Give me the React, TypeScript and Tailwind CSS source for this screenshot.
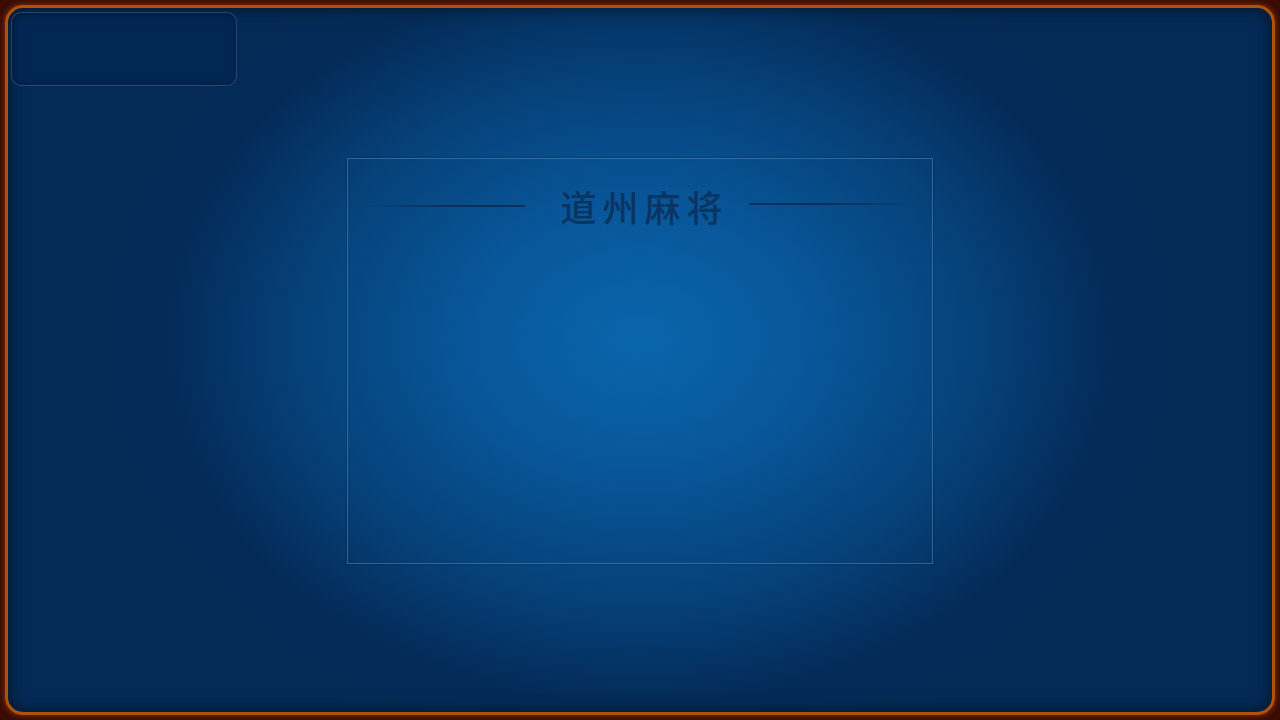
import React from 'react'

export default function App() {
  return (
    <div className="w-[1280px] h-[720px] bg-[#3a0c02] p-[5px] overflow-hidden">
      {/* Table frame */}
      <div className="w-full h-full rounded-[18px] border-[3px] border-[#b0520c] shadow-[0_0_4px_2px_rgba(150,60,5,0.5)] bg-[radial-gradient(ellipse_560px_430px_at_50%_47%,#0a66ab_0%,#08579a_30%,#06427a_60%,#042b58_85%,#042a55_100%)] overflow-hidden">
        <div className="w-full h-full rounded-[15px] shadow-[inset_0_0_16px_rgba(0,0,0,0.55)] pt-[4px] px-[3px] flex flex-col">
          {/* Top-left info panel */}
          <div className="w-[226px] h-[74px] rounded-[10px] border border-[#4a78a8]/45 bg-[#022450]/40 shadow-[inset_0_0_6px_rgba(0,0,0,0.3)]" />

          {/* Center room panel */}
          <div className="flex-1 flex justify-center pt-[72px]">
            <div className="w-[586px] h-[406px] border border-[#6a9ac8]/45 shadow-[0_0_2px_rgba(0,0,0,0.4)]">
              <div className="flex items-center justify-center pt-[23px]">
                <div className="w-[162px] h-[2px] bg-gradient-to-r from-transparent via-[#0b2f5a] to-[#0b2f5a]" />
                <div className="ml-[35px] mr-[20px] text-[36px] leading-[48px] tracking-[6px] font-medium text-[#0a3462] font-['Noto_Sans_CJK_SC',sans-serif]">
                  道州麻将
                </div>
                <div className="w-[168px] h-[2px] -mt-[4px] bg-gradient-to-l from-transparent via-[#0b2f5a] to-[#0b2f5a]" />
              </div>
            </div>
          </div>
        </div>
      </div>
    </div>
  )
}
